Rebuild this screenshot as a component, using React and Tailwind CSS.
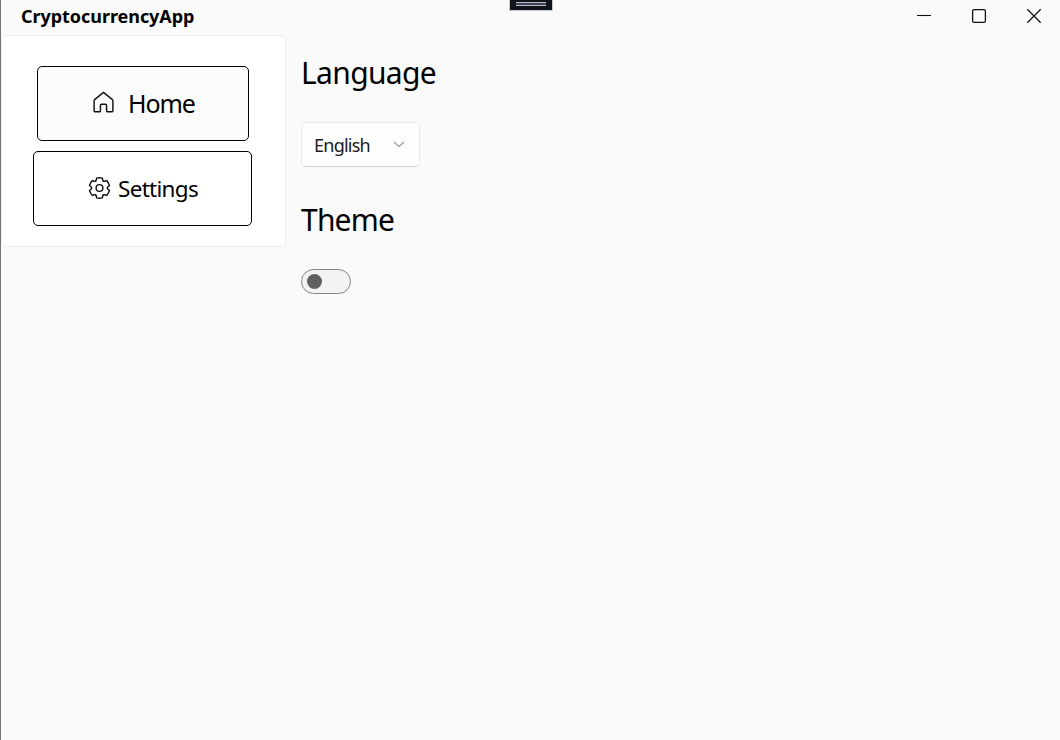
const GEAR_ANGLES = [0, 60, 120, 180, 240, 300];

function GearIcon() {
  return (
    <svg className="mb-0.5 shrink-0" width="24" height="24" viewBox="-12.5 -12 24 24" fill="none" stroke="#111" strokeWidth="1.4" strokeLinejoin="round" strokeLinecap="round">
      {GEAR_ANGLES.map((angle) => (
        <path
          key={angle}
          transform={`rotate(${angle})`}
          d="M-3.95 -6.84Q-3.3 -7.3 -3.2 -8L-2.85 -9.9Q0 -10.5 2.85 -9.9L3.2 -8Q3.3 -7.3 3.95 -6.84"
        />
      ))}
      <circle r="3.4" />
    </svg>
  );
}

function TitleBar() {
  return (
    <header className="flex h-[35px] items-start justify-between pl-5">
      <h1 className="h-8 w-[175px] text-[18px] leading-8 font-bold tracking-[-0.05px] whitespace-nowrap">
        CryptocurrencyApp
      </h1>
      <div className="flex h-8">
        <button className="flex w-[55px] items-center justify-center" aria-label="Minimize">
          <svg width="16" height="16" viewBox="0 0 16 16" fill="none" stroke="#111">
            <path d="M1 7.5H15" strokeWidth="1.1" />
          </svg>
        </button>
        <button className="flex w-[55px] items-center justify-center" aria-label="Maximize">
          <svg width="16" height="16" viewBox="0 0 16 16" fill="none" stroke="#111" strokeWidth="1.3">
            <rect x="1.6" y="1.6" width="12.8" height="12.8" rx="1.5" />
          </svg>
        </button>
        <button className="flex w-[54px] items-center justify-center pl-px" aria-label="Close">
          <svg width="16" height="16" viewBox="0 0 16 16" fill="none" stroke="#111" strokeWidth="1.3">
            <path d="M1.3 1.3L14.7 14.7M14.7 1.3L1.3 14.7" />
          </svg>
        </button>
      </div>
    </header>
  );
}

function Sidebar() {
  return (
    <nav className="h-[212px] w-[285px] rounded-[5px] border border-[#ececec] bg-white pt-[30px] pl-[31px]">
      <button className="ml-1 flex h-[75px] w-[212px] items-center rounded-[5px] border border-black bg-[#fcfcfc] pl-[54px]">
        <svg className="mb-1" width="23" height="24" viewBox="0 0 24 24" fill="none" stroke="#111" strokeWidth="1.5" strokeLinejoin="round">
          <path d="M12 2L21 9.2Q21.8 9.9 21.8 11V21Q21.8 22.2 20.6 22.2H16.4Q15.2 22.2 15.2 21V15.6Q15.2 14.4 14 14.4H10Q8.8 14.4 8.8 15.6V21Q8.8 22.2 7.6 22.2H3.4Q2.2 22.2 2.2 21V11Q2.2 9.9 3 9.2Z" />
        </svg>
        <span className="ml-[13px] pb-px text-[25px] leading-8 tracking-[-1.1px]">Home</span>
      </button>
      <button className="mt-2.5 flex h-[75px] w-[219px] items-center rounded-[5px] border border-black bg-white pl-[53px]">
        <GearIcon />
        <span className="ml-[7px] text-[22.5px] leading-8 tracking-[-0.7px]">Settings</span>
      </button>
    </nav>
  );
}

function SettingsPage() {
  return (
    <main className="ml-[15px] flex flex-col items-start">
      <h2 className="mt-[18px] h-10 text-[30px] leading-10 tracking-[-0.65px]">Language</h2>
      <button className="mt-[29px] flex h-[45px] w-[119px] items-center justify-between rounded-[5px] border border-[#e9e9e9] border-b-[#d0d0d0] bg-[#fefefe] pr-[14px] pl-3">
        <span className="pt-px text-[18px] tracking-[-0.75px] text-[#1a1a1a]">English</span>
        <svg width="12" height="8" viewBox="0 0 12 8" fill="none" stroke="#969696" strokeWidth="1.1">
          <path d="M1 1L6 5.5L11 1" />
        </svg>
      </button>
      <h2 className="mt-[33px] h-10 text-[30px] leading-10 tracking-[-0.8px]">Theme</h2>
      <button className="mt-[29px] flex h-[25px] w-[50px] items-center rounded-full border border-[#858585] bg-[#f3f3f3] pl-[5px]" aria-label="Theme">
        <span className="size-[15px] rounded-full bg-[#5f5f5f]" />
      </button>
    </main>
  );
}

export default function App() {
  return (
    <div className="relative h-[740px] w-[1060px] overflow-hidden border-l border-[#757575] bg-[#fafafa] font-['Noto_Sans','Open_Sans',sans-serif] text-black">
      <TitleBar />
      <div className="flex items-start">
        <Sidebar />
        <SettingsPage />
      </div>
      <div className="absolute top-0 left-[508px] flex h-[11px] w-[44px] flex-col items-center border border-t-0 border-[#c5cad5] bg-[#11161b] pt-0.5">
        <span className="h-1 w-[30px] border-y border-[#b4bac8] bg-[#414856]" />
      </div>
    </div>
  );
}
